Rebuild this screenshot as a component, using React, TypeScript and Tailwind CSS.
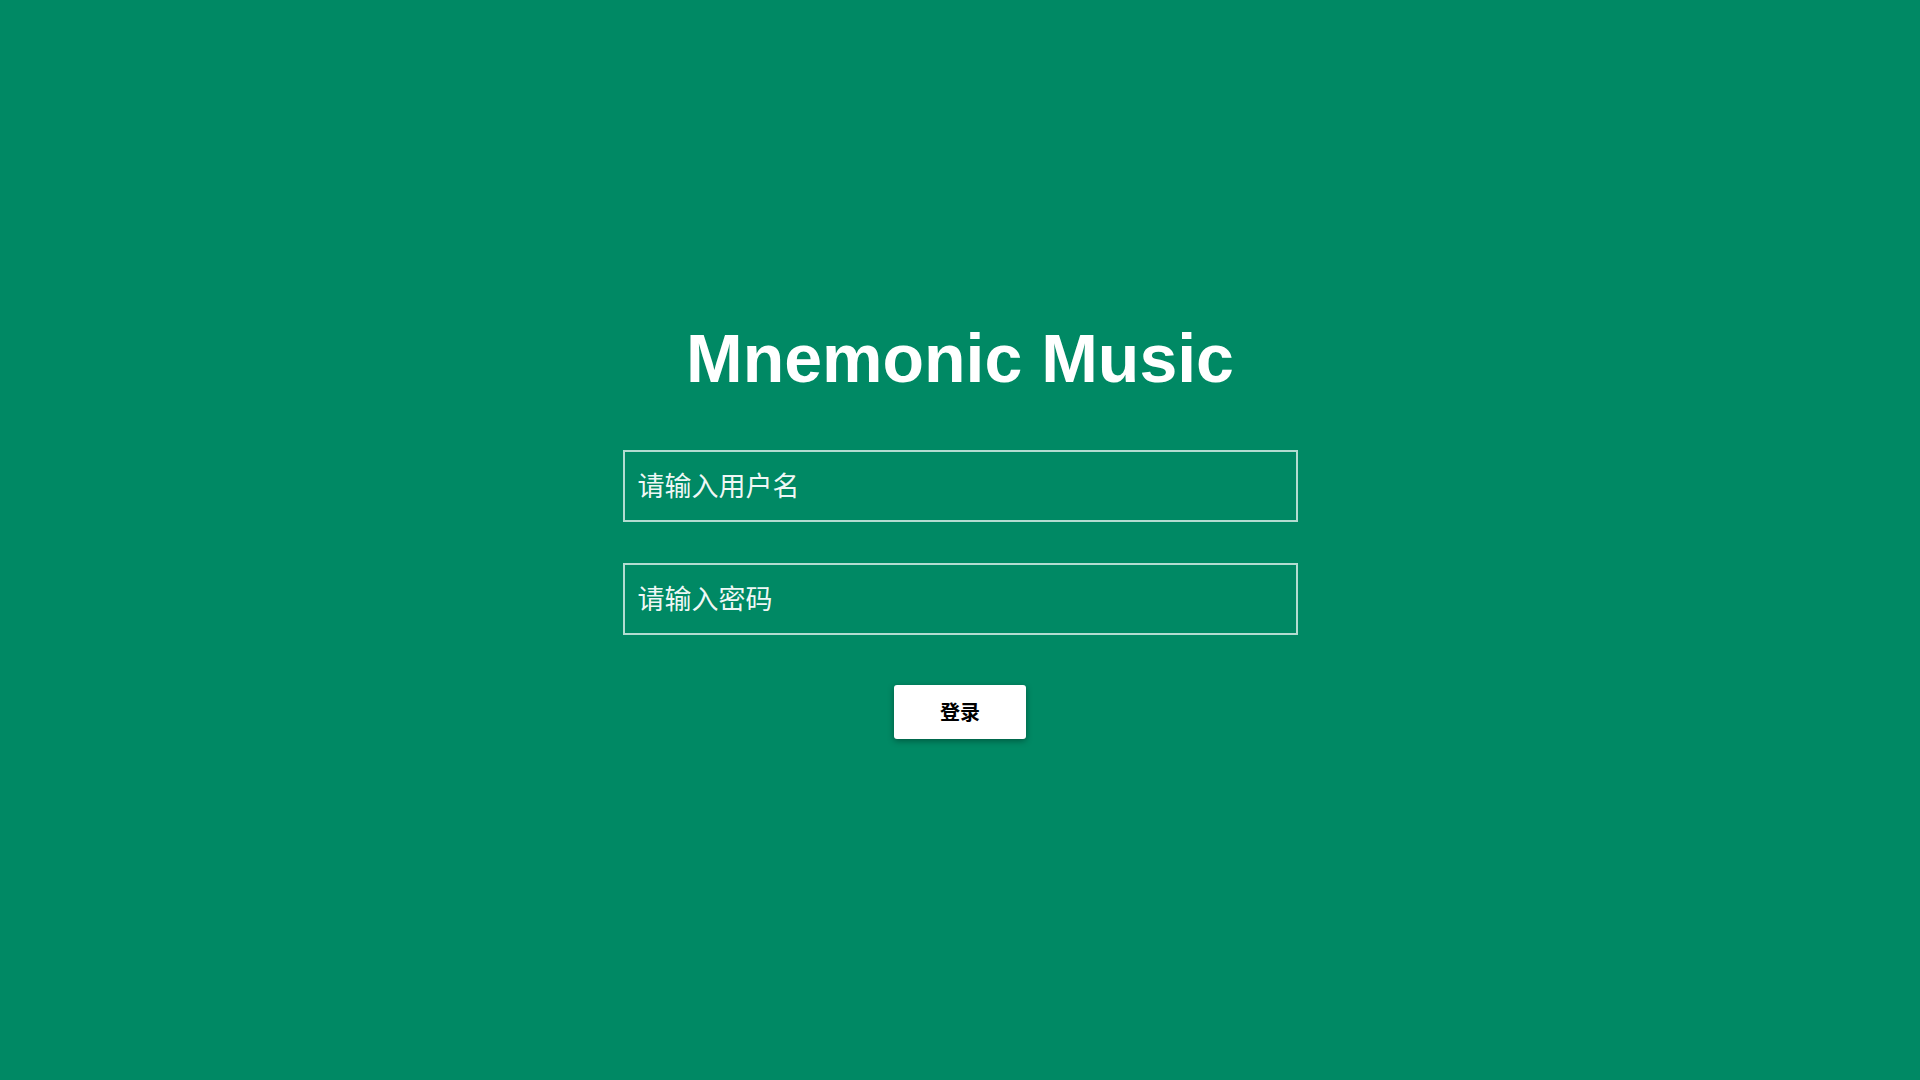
import React, { useState } from 'react';

const App: React.FC = () => {
  const [username, setUsername] = useState('');
  const [password, setPassword] = useState('');

  const inputCls =
    "w-[675px] h-[72px] border-2 border-white/70 bg-transparent px-[13px] pb-[3px] text-[27px] text-white placeholder:text-white/95 outline-none font-['Noto_Sans_CJK_SC',sans-serif]";

  return (
    <div className="min-h-screen w-full bg-[#008964] flex flex-col items-center pt-[320px] font-['Liberation_Sans','Noto_Sans_CJK_SC',sans-serif]">
      <h1 className="text-white text-[68px] font-bold leading-[76px] m-0">Mnemonic Music</h1>

      <input
        type="text"
        value={username}
        onChange={(e) => setUsername(e.target.value)}
        placeholder="请输入用户名"
        className={`mt-[54px] ${inputCls}`}
      />

      <input
        type="password"
        value={password}
        onChange={(e) => setPassword(e.target.value)}
        placeholder="请输入密码"
        className={`mt-[41px] ${inputCls}`}
      />

      <button className="mt-[50px] w-[132px] h-[54px] bg-white rounded-[3px] text-black text-[20px] font-bold shadow-[0_2px_6px_rgba(0,0,0,0.35)] font-['Noto_Sans_CJK_SC',sans-serif]">
        登录
      </button>
    </div>
  );
};

export default App;
